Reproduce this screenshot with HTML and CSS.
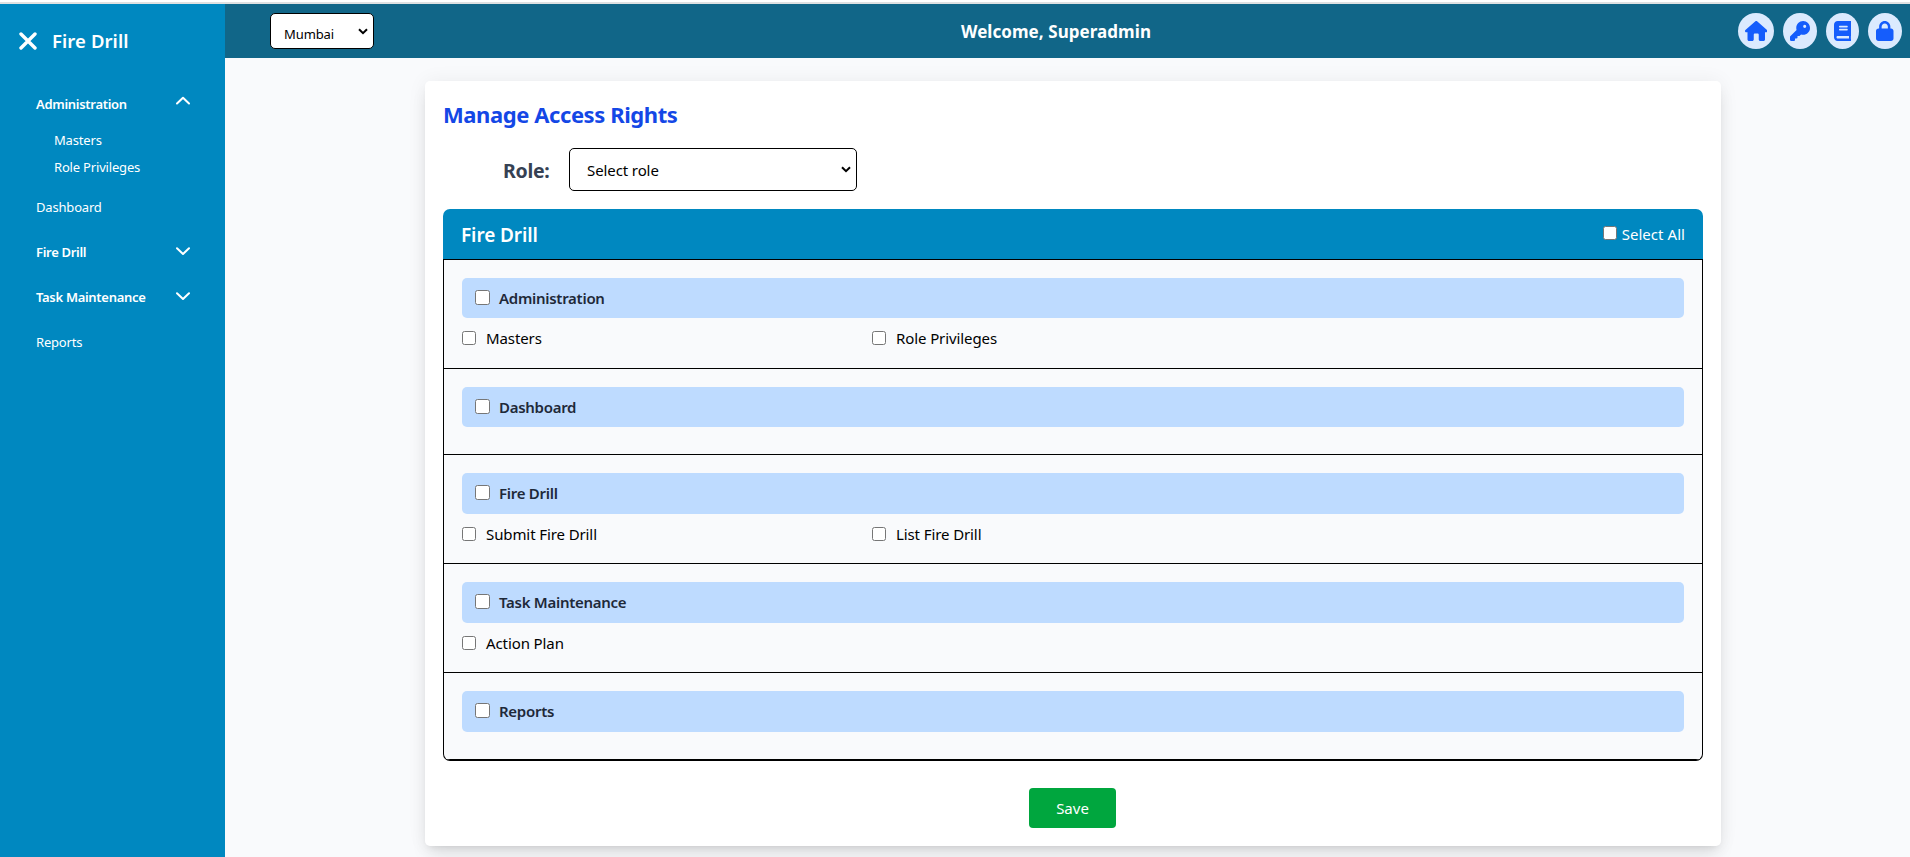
FILE: index.html
```
<!DOCTYPE html>
<html lang="en">
<head>
<meta charset="utf-8">
<title>Fire Drill</title>
<link rel="stylesheet" href="styles.css">
</head>
<body>
<div class="app">
  <aside class="sidebar">
    <div class="brand">
      <svg class="close" viewBox="0 0 18 18"><path d="M2 2L16 16M16 2L2 16"/></svg>
      <span class="brand-name">Fire Drill</span>
    </div>
    <nav class="menu">
      <div class="item group"><span>Administration</span><svg class="chev up" viewBox="0 0 14 9"><path d="M1 7.5L7 1.7L13 7.5"/></svg></div>
      <div class="sub"><span>Masters</span></div>
      <div class="sub"><span>Role Privileges</span></div>
      <div class="item after-sub"><span>Dashboard</span></div>
      <div class="item group"><span>Fire Drill</span><svg class="chev" viewBox="0 0 14 9"><path d="M1 1.2L7 7L13 1.2"/></svg></div>
      <div class="item group"><span>Task Maintenance</span><svg class="chev" viewBox="0 0 14 9"><path d="M1 1.2L7 7L13 1.2"/></svg></div>
      <div class="item"><span>Reports</span></div>
    </nav>
  </aside>
  <div class="main">
    <header class="topbar">
      <div class="select city"><span>Mumbai</span><svg viewBox="0 0 10 7"><path d="M1 1.2L5 5.2L9 1.2"/></svg></div>
      <h1 class="welcome">Welcome, Superadmin</h1>
      <div class="actions">
        <span class="round home"><svg viewBox="0 0 576 512"><path d="M575.8 255.5c0 18-15 32.1-32 32.1h-32l.7 160.2c0 2.700-.2 5.400-.5 8.100V472c0 22.100-17.900 40-40 40H392c-22.100 0-40-17.900-40-40V352c0-17.700-14.300-32-32-32h-64c-17.700 0-32 14.300-32 32v120c0 22.100-17.900 40-40 40h-80c-22.100 0-40-17.900-40-40V287.600H32c-18 0-32-14-32-32.100 0-9 3-17 10-24L266.400 8c7-7 15-8 22-8s15 2 21 7L564.800 231.500c8 7 12 15 11 24z"/></svg></span>
        <span class="round key"><svg viewBox="0 0 512 512"><path fill-rule="evenodd" d="M336 352c97.200 0 176-78.800 176-176S433.200 0 336 0 160 78.800 160 176c0 18.700 2.900 36.800 8.300 53.700L7 391c-4.500 4.500-7 10.600-7 17v80c0 13.300 10.700 24 24 24h80c13.300 0 24-10.700 24-24v-40h40c13.300 0 24-10.700 24-24v-40h40c6.400 0 12.500-2.500 17-7l33.300-33.300c16.900 5.400 35 8.300 53.700 8.300zM376 96a40 40 0 1 1 0 80 40 40 0 1 1 0-80z"/></svg></span>
        <span class="round book"><svg viewBox="0 0 448 512"><path fill-rule="evenodd" d="M96 0C43 0 0 43 0 96v320c0 53 43 96 96 96h336c9 0 16-7 16-16v-16c0-9-7-16-16-20v-72c9-3 16-11 16-20V24c0-13-11-24-24-24H96zm0 384h288v64H96c-17.700 0-32-14.300-32-32s14.300-32 32-32zm32-244c0-8.800 7.200-16 16-16h192c8.800 0 16 7.200 16 16v8c0 8.800-7.200 16-16 16H144c-8.800 0-16-7.200-16-16v-8zm16 60h192c8.800 0 16 7.200 16 16v8c0 8.800-7.200 16-16 16H144c-8.800 0-16-7.200-16-16v-8c0-8.800 7.200-16 16-16z"/></svg></span>
        <span class="round lock"><svg viewBox="0 0 448 512"><path fill-rule="evenodd" d="M144 144v48h160v-48c0-44.200-35.800-80-80-80s-80 35.800-80 80zM80 192v-48C80 64.500 144.500 0 224 0s144 64.500 144 144v48h16c35.300 0 64 28.700 64 64v192c0 35.300-28.700 64-64 64H64c-35.300 0-64-28.700-64-64V256c0-35.300 28.700-64 64-64h16z"/></svg></span>
      </div>
    </header>
    <main class="card">
      <h2 class="title">Manage Access Rights</h2>
      <div class="role-row">
        <label class="role-label">Role:</label>
        <div class="select role"><span>Select role</span><svg viewBox="0 0 10 7"><path d="M1 1.2L5 5.2L9 1.2"/></svg></div>
      </div>
      <section class="panel">
        <div class="panel-head">
          <h3 class="panel-title">Fire Drill</h3>
          <label class="all"><i class="box"></i><span>Select All</span></label>
        </div>
        <div class="blocks">
          <div class="block">
            <label class="band"><i class="box"></i><span>Administration</span></label>
            <div class="opts"><label><i class="box"></i><span>Masters</span></label><label><i class="box"></i><span>Role Privileges</span></label></div>
          </div>
          <div class="block empty">
            <label class="band"><i class="box"></i><span>Dashboard</span></label>
          </div>
          <div class="block">
            <label class="band tall"><i class="box"></i><span>Fire Drill</span></label>
            <div class="opts"><label><i class="box"></i><span>Submit Fire Drill</span></label><label><i class="box"></i><span>List Fire Drill</span></label></div>
          </div>
          <div class="block">
            <label class="band tall"><i class="box"></i><span>Task Maintenance</span></label>
            <div class="opts"><label><i class="box"></i><span>Action Plan</span></label></div>
          </div>
          <div class="block empty">
            <label class="band tall"><i class="box"></i><span>Reports</span></label>
          </div>
        </div>
      </section>
      <div class="foot"><button class="save">Save</button></div>
    </main>
  </div>
</div>
</body>
</html>
```
FILE: styles.css
```
* { box-sizing: border-box; }
body {
  margin: 0;
  height: 857px;
  overflow: hidden;
  border-top: 2px solid #fff;
  background: #f9fafc;
  color: #000;
  font-family: "Noto Sans", "Open Sans", sans-serif;
  font-size: 15px;
  letter-spacing: -0.1px;
  white-space: nowrap;
}
h1, h2, h3 { margin: 0; }
svg { display: block; flex: none; }
.app { display: flex; height: 855px; border-top: 2px solid #dfe1e2; }

.sidebar { width: 225px; flex: none; background: #0088c0; color: #fff; font-size: 13px; letter-spacing: -0.18px; }
.brand { display: flex; align-items: center; gap: 15px; height: 72px; padding: 1px 0 0 19px; }
.close { width: 18px; height: 18px; fill: none; stroke: #fff; stroke-width: 3.4; stroke-linecap: round; }
.brand-name { font-size: 18.5px; font-weight: 600; letter-spacing: 0.08px; }
.menu { padding: 5px 35px 0 36px; }
.item { display: flex; align-items: center; justify-content: space-between; height: 45px; }
.group { font-weight: 600; letter-spacing: -0.3px; }
.after-sub { margin-top: 4px; }
.sub { display: flex; align-items: center; height: 27px; padding-left: 18px; }
.chev { width: 14px; height: 9px; fill: none; stroke: #fff; stroke-width: 2; stroke-linecap: round; stroke-linejoin: round; }
.up { margin-bottom: 6px; }

.main { flex: 1; min-width: 0; }
.topbar { display: flex; justify-content: space-between; align-items: center; height: 54px; padding: 0 8px 0 45px; background: #116688; }
.select { display: flex; align-items: center; justify-content: space-between; background: #fff; border: 1px solid #000; border-radius: 5px; }
.select svg { width: 10px; height: 7px; fill: none; stroke: #000; stroke-width: 2; }
.city { width: 104px; height: 36px; padding: 0 5px 0 13px; font-size: 13px; }
.city span { padding-top: 5px; }
.welcome { color: #fff; font-size: 17px; font-weight: 700; letter-spacing: 0.06px; }
.actions { display: flex; justify-content: flex-end; gap: 9px; }
.round { display: flex; align-items: center; justify-content: center; width: 34px; height: 36px; border-radius: 50%; background: #dbeafe; }
.round svg { height: 20px; fill: #155dfc; }
.home { width: 36px; }
.book { width: 33px; }

.card { width: 1296px; height: 765px; margin: 23px 0 0 200px; padding: 18px; border-radius: 5px; background: #fff; box-shadow: 0 11px 17px -3px rgba(0,0,0,.1), 0 4px 7px -4px rgba(0,0,0,.1), 0 0 20px rgba(0,0,0,.06); }
.title { height: 31px; line-height: 31px; color: #1447e6; font-size: 22px; font-weight: 700; letter-spacing: -0.42px; }
.role-row { display: flex; align-items: center; height: 43px; margin: 18px 0; padding-left: 60px; gap: 18px; }
.role-label { width: 48px; padding-top: 2px; color: #364153; font-size: 19.5px; font-weight: 700; letter-spacing: -0.3px; }
.role { width: 288px; height: 43px; padding: 0 5px 0 17px; }
.panel-head { display: flex; align-items: center; justify-content: space-between; height: 50px; padding: 0 18px; border-radius: 7px 7px 0 0; background: #0088c0; color: #fff; }
.panel-title { padding-top: 1px; font-size: 19px; font-weight: 600; }
.all { display: flex; align-items: center; gap: 5px; letter-spacing: 0.05px; }
.box { flex: none; width: 14px; height: 14px; border: 1px solid #767676; border-radius: 2.5px; background: #fff; }
.all .box { margin-bottom: 2px; }
.blocks { overflow: hidden; border: 1px solid #000; border-top: 0; border-radius: 0 0 7px 7px; background: #f9fafc; }
.block { height: 109px; padding: 18px; border-top: 1px solid #000; }
.empty { height: 86px; }
.block:last-child { height: 88px; border-bottom: 1px solid #000; }
.band { display: flex; align-items: center; gap: 9px; height: 40px; padding-left: 13px; border-radius: 5px; background: #bedbff; color: #1e2939; font-weight: 600; letter-spacing: -0.28px; }
.tall { height: 41px; padding-bottom: 1px; }
.band .box { width: 15px; height: 15px; margin-bottom: 1px; }
.opts { display: grid; grid-template-columns: 410px 410px; height: 40px; }
.opts label { display: flex; align-items: center; gap: 10px; }
.foot { display: flex; justify-content: center; padding: 27px 1px 0 0; }
.save { width: 87px; height: 40px; padding: 0; border: 0; border-radius: 4px; background: #00a63e; color: #fff; font: inherit; }
```
